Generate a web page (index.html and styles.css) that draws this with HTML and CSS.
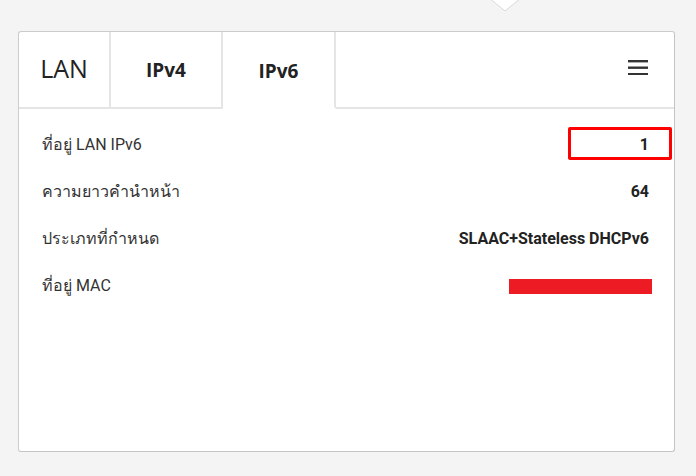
FILE: index.html
```html
<!DOCTYPE html>
<html lang="th">
	<head>
		<meta charset="utf-8" />
		<title>LAN IPv6</title>
		<link rel="stylesheet" href="styles.css">
	</head>
	<body>
		<!-- flecha del menu superior -->
		<svg class="caret" width="40" height="14" viewBox="0 0 40 14">
			<polygon points="2,-2 18,11 34,-2" fill="#fff" stroke="#d9d9d9" stroke-width="1" />
		</svg>
		<div class="pagina">
			<div class="tarjeta">
				<div class="pestanas">
					<div class="pestana titulo">LAN</div>
					<div class="pestana">IPv4</div>
					<div class="pestana activa">IPv6</div>
					<div class="menu">
						<svg width="20" height="16" viewBox="0 0 20 16">
							<rect x="0" y="1" width="20" height="2.4" fill="#333" />
							<rect x="0" y="7.5" width="20" height="2.4" fill="#333" />
							<rect x="0" y="14" width="20" height="2.4" fill="#333" />
						</svg>
					</div>
				</div>
				<div class="datos">
					<div class="fila">
						<span class="etiqueta">ที่อยู่ LAN IPv6</span>
						<span class="valor">1</span>
					</div>
					<div class="fila">
						<span class="etiqueta">ความยาวคำนำหน้า</span>
						<span class="valor">64</span>
					</div>
					<div class="fila">
						<span class="etiqueta">ประเภทที่กำหนด</span>
						<span class="valor">SLAAC+Stateless DHCPv6</span>
					</div>
					<div class="fila">
						<span class="etiqueta">ที่อยู่ MAC</span>
						<span class="valor"><span class="tapado"></span></span>
					</div>
				</div>
				<!-- recuadro rojo de marca -->
				<div class="marca"></div>
			</div>
		</div>
	</body>
</html>
```

FILE: styles.css
```css
* {
	margin: 0;
	padding: 0;
	box-sizing: border-box;
}

body {
	background-color: #f4f4f4;
	font-family: Roboto, "Noto Sans", sans-serif;
	color: #333;
	position: relative;
}

.caret {
	position: absolute;
	left: 487px;
	top: 0;
}

.pagina {
	padding: 31px 0 0 18px;
}

.tarjeta {
	position: relative;
	width: 657px;
	height: 421px;
	background-color: #fff;
	border: 1px solid #ccc;
	border-right-color: #c4c4c4;
	border-bottom-color: #c4c4c4;
	border-radius: 3px;
}

/* cabecera con pestanas */
.pestanas {
	display: flex;
	height: 77px;
}

.pestana {
	width: 112px;
	display: flex;
	align-items: center;
	justify-content: center;
	font-family: "Open Sans", sans-serif;
	font-weight: bold;
	font-size: 19px;
	color: #222;
	border-right: 2px solid #e5e5e5;
	border-bottom: 2px solid #e5e5e5;
	padding-top: 1px;
}

.pestana.titulo {
	width: 92px;
	font-weight: normal;
	font-size: 25px;
	padding-top: 0;
	padding-bottom: 4px;
}

.pestana.activa {
	width: 113px;
	border-bottom-color: #fff;
	padding-top: 3px;
}

.menu {
	flex: 1;
	display: flex;
	align-items: center;
	justify-content: flex-end;
	padding-right: 26px;
	padding-bottom: 6px;
	border-bottom: 2px solid #e5e5e5;
}

.menu svg {
	display: block;
}

/* filas de datos */
.datos {
	padding: 12px 25px 0 23px;
}

.fila {
	display: flex;
	justify-content: space-between;
	align-items: center;
	height: 47px;
	font-size: 16px;
}

.etiqueta {
	color: #333;
}

.valor {
	font-weight: bold;
	color: #222;
}

.tapado {
	display: block;
	width: 143px;
	height: 15px;
	margin-right: -3px;
	margin-top: 2px;
	background-color: #ed1c24;
}

.marca {
	position: absolute;
	left: 549px;
	top: 95px;
	width: 104px;
	height: 33px;
	border: 3px solid #f00;
	border-radius: 2px;
}
```
